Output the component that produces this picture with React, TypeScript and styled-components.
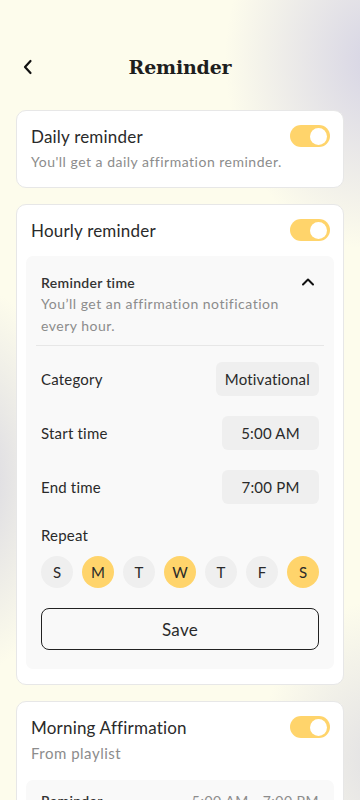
import styled, { createGlobalStyle } from "styled-components";

const GlobalStyle = createGlobalStyle`
  html, body {
    margin: 0;
    padding: 0;
  }
  body {
    font-family: "Lato", "Noto Sans", sans-serif;
    color: #222;
  }
  * {
    box-sizing: border-box;
  }
`;

const days = [
  { label: "S", active: false },
  { label: "M", active: true },
  { label: "T", active: false },
  { label: "W", active: true },
  { label: "T", active: false },
  { label: "F", active: false },
  { label: "S", active: true },
];

const Toggle = ({ on = true }: { on?: boolean }) => (
  <Switch $on={on}>
    <Knob $on={on} />
  </Switch>
);

const ChevronLeft = () => (
  <svg width="12" height="16" viewBox="0 0 12 16" fill="none">
    <path d="M8.5 2 L3 8 L8.5 14" stroke="#111" strokeWidth="2.2" strokeLinecap="round" strokeLinejoin="round" />
  </svg>
);

const ChevronUp = () => (
  <svg width="14" height="10" viewBox="0 0 14 10" fill="none">
    <path d="M2 7.5 L7 2.5 L12 7.5" stroke="#111" strokeWidth="2" strokeLinecap="round" strokeLinejoin="round" />
  </svg>
);

export default function App() {
  return (
    <Page>
      <GlobalStyle />
      <Header>
        <BackButton>
          <ChevronLeft />
        </BackButton>
        <Title>Reminder</Title>
      </Header>

      <Cards>
        <Card>
          <CardHead>
            <CardTitle>Daily reminder</CardTitle>
            <Toggle />
          </CardHead>
          <CardSub>You'll get a daily affirmation reminder.</CardSub>
        </Card>

        <Card>
          <CardHead>
            <CardTitle>Hourly reminder</CardTitle>
            <Toggle />
          </CardHead>
          <Panel>
            <PanelHead>
              <PanelTitle>Reminder time</PanelTitle>
              <ChevronUp />
            </PanelHead>
            <PanelText>You’ll get an affirmation notification every hour.</PanelText>
            <Divider />
            <Rows>
              <Row>
                <RowLabel>Category</RowLabel>
                <Pill>Motivational</Pill>
              </Row>
              <Row>
                <RowLabel>Start time</RowLabel>
                <Pill $wide>5:00 AM</Pill>
              </Row>
              <Row>
                <RowLabel>End time</RowLabel>
                <Pill $wide>7:00 PM</Pill>
              </Row>
            </Rows>
            <RepeatLabel>Repeat</RepeatLabel>
            <Days>
              {days.map((d, i) => (
                <Day key={i} $active={d.active}>
                  {d.label}
                </Day>
              ))}
            </Days>
            <SaveButton>Save</SaveButton>
          </Panel>
        </Card>

        <Card>
          <CardHead>
            <CardTitle>Morning Affirmation</CardTitle>
            <Toggle />
          </CardHead>
          <CardSub $large>From playlist</CardSub>
          <Panel $compact>
            <SummaryRow>
              <PanelTitle>Reminder</PanelTitle>
              <SummaryValue>5:00 AM - 7:00 PM</SummaryValue>
            </SummaryRow>
          </Panel>
        </Card>
      </Cards>
    </Page>
  );
}

const Page = styled.div`
  width: 360px;
  height: 800px;
  overflow: hidden;
  padding: 0 16px;
  background:
    radial-gradient(ellipse 150px 190px at 375px 60px, rgba(212, 210, 228, 0.95), rgba(212, 210, 228, 0) 100%),
    radial-gradient(ellipse 90px 190px at -20px 480px, rgba(214, 213, 224, 0.9), rgba(214, 213, 224, 0) 100%),
    radial-gradient(ellipse 120px 160px at 380px 760px, rgba(214, 213, 224, 0.7), rgba(214, 213, 224, 0) 100%),
    #fdfcec;
`;

const Header = styled.div`
  position: relative;
  height: 110px;
  display: flex;
  align-items: center;
  justify-content: center;
  padding-top: 24px;
`;

const BackButton = styled.div`
  position: absolute;
  left: 6px;
  top: 59px;
  width: 16px;
  height: 16px;
  display: flex;
  align-items: center;
`;

const Title = styled.h1`
  margin: 0;
  font-family: "DejaVu Serif", "Liberation Serif", serif;
  font-weight: 700;
  font-size: 19px;
  color: #1e1e1e;
  letter-spacing: -0.2px;
`;

const Cards = styled.div`
  display: flex;
  flex-direction: column;
  gap: 16px;
`;

const Card = styled.div`
  background: #fff;
  border: 1px solid #e7e7e7;
  border-radius: 10px;
  padding: 13px 9px 15px;
`;

const CardHead = styled.div`
  display: flex;
  align-items: center;
  justify-content: space-between;
  padding: 0 4px 0 5px;
  height: 24px;
`;

const CardTitle = styled.div`
  font-size: 17px;
  color: #2a2a2a;
  letter-spacing: 0.2px;
`;

const CardSub = styled.div<{ $large?: boolean }>`
  margin-top: 4px;
  padding: 0 5px;
  font-size: ${(p) => (p.$large ? "15px" : "14px")};
  line-height: 20px;
  color: #8c8c8c;
  letter-spacing: 0.5px;
`;

const Switch = styled.div<{ $on: boolean }>`
  width: 40px;
  height: 22px;
  border-radius: 11px;
  background: ${(p) => (p.$on ? "#ffd46b" : "#dcdcdc")};
  display: flex;
  align-items: center;
  justify-content: ${(p) => (p.$on ? "flex-end" : "flex-start")};
  padding: 0 3px;
`;

const Knob = styled.div<{ $on: boolean }>`
  width: 17px;
  height: 17px;
  border-radius: 50%;
  background: #fff;
`;

const Panel = styled.div<{ $compact?: boolean }>`
  margin-top: ${(p) => (p.$compact ? "17px" : "14px")};
  background: #f9f9f9;
  border-radius: 7px;
  padding: ${(p) => (p.$compact ? "8px 15px" : "16px 10px 19px")};
`;

const PanelHead = styled.div`
  display: flex;
  align-items: center;
  justify-content: space-between;
  padding: 0 9px 0 5px;
  height: 20px;
`;

const PanelTitle = styled.div`
  font-size: 14px;
  font-weight: 600;
  color: #333;
  letter-spacing: 0.3px;
`;

const PanelText = styled.div`
  margin-top: 1px;
  padding: 0 5px;
  max-width: 260px;
  font-size: 14px;
  line-height: 22px;
  color: #8c8c8c;
  letter-spacing: 0.5px;
`;

const Divider = styled.div`
  margin-top: 8px;
  height: 1px;
  background: #e7e7e7;
`;

const Rows = styled.div`
  margin-top: 16px;
  padding: 0 5px;
  display: flex;
  flex-direction: column;
  gap: 20px;
`;

const Row = styled.div`
  display: flex;
  align-items: center;
  justify-content: space-between;
`;

const RowLabel = styled.div`
  font-size: 15px;
  color: #2a2a2a;
  letter-spacing: 0.2px;
`;

const Pill = styled.div<{ $wide?: boolean }>`
  height: 34px;
  min-width: ${(p) => (p.$wide ? "97px" : "auto")};
  padding: 0 9px;
  border-radius: 6px;
  background: #efefef;
  display: flex;
  align-items: center;
  justify-content: center;
  font-size: 15px;
  color: #2a2a2a;
  letter-spacing: 0.2px;
`;

const RepeatLabel = styled(RowLabel)`
  margin-top: 21px;
  padding: 0 5px;
  line-height: 20px;
`;

const Days = styled.div`
  margin-top: 11px;
  padding: 0 5px;
  display: flex;
  justify-content: space-between;
`;

const Day = styled.div<{ $active: boolean }>`
  width: 32px;
  height: 32px;
  border-radius: 50%;
  background: ${(p) => (p.$active ? "#ffd46b" : "#efefef")};
  display: flex;
  align-items: center;
  justify-content: center;
  font-size: 15px;
  color: #2a2a2a;
`;

const SaveButton = styled.button`
  margin: 20px 5px 0;
  width: calc(100% - 10px);
  height: 42px;
  border: 1px solid #222;
  border-radius: 8px;
  background: transparent;
  font-family: inherit;
  font-size: 17px;
  color: #2a2a2a;
  letter-spacing: 0.3px;
  display: flex;
  align-items: center;
  justify-content: center;
`;

const SummaryRow = styled.div`
  display: flex;
  align-items: center;
  justify-content: space-between;
  height: 20px;
  margin-top: 2px;
`;

const SummaryValue = styled.div`
  font-size: 14px;
  color: #8c8c8c;
  letter-spacing: 0.5px;
`;
